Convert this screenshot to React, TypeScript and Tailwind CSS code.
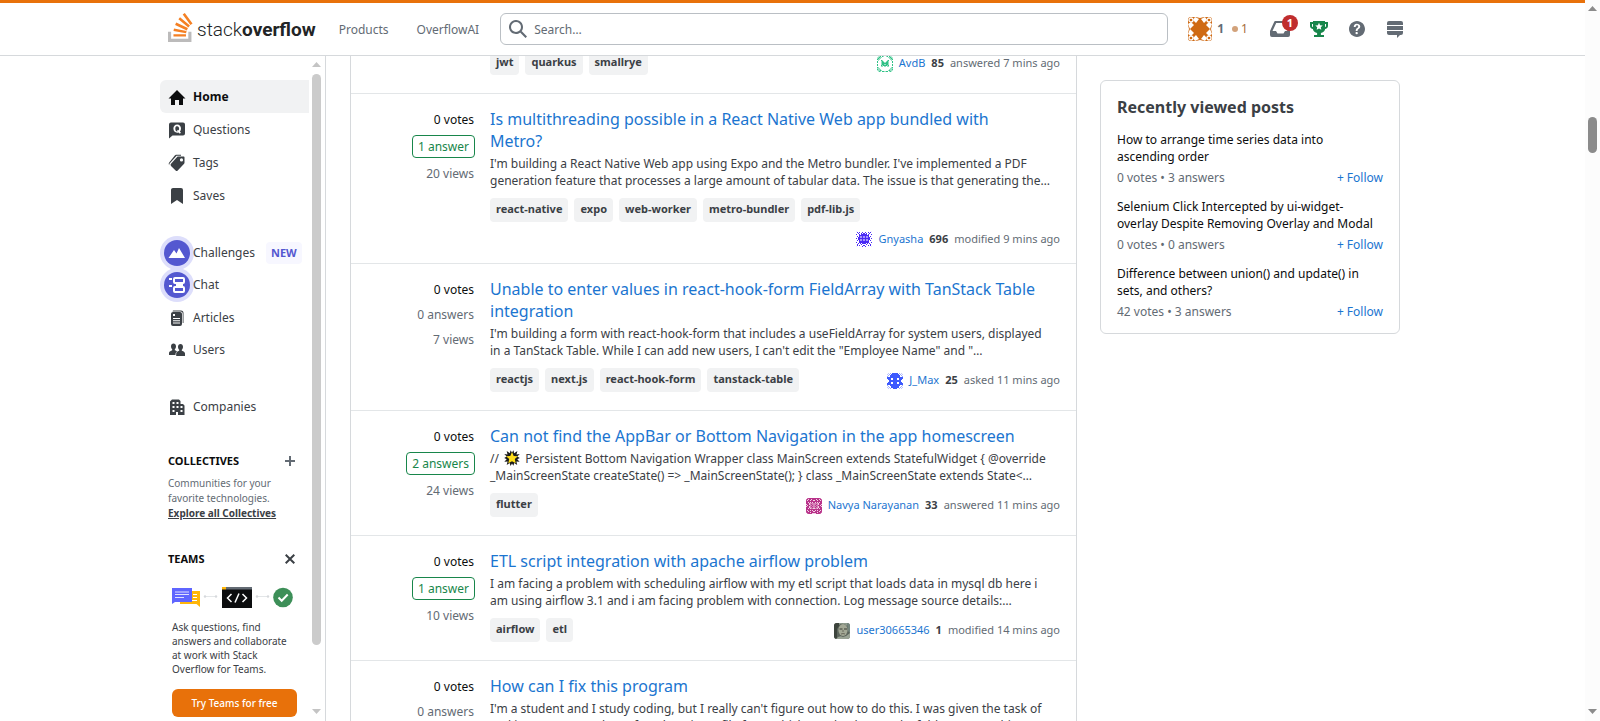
import type { ReactNode } from 'react';

type Stat = { votes: string; answers: string; accepted?: boolean; views: string };
type Post = {
  stat: Stat;
  title: string;
  excerpt: ReactNode;
  tags: string[];
  user: string;
  rep: string;
  action: string;
  avatar: ReactNode;
  wrapCard?: boolean;
};

function Identicon({ rows, color, bg }: { rows: string[]; color: string; bg: string }) {
  const n = rows.length;
  return (
    <svg className="size-4 shrink-0 rounded-[3px]" viewBox={`0 0 ${n} ${n}`} shapeRendering="crispEdges" aria-hidden="true">
      <rect width={n} height={n} fill={bg} />
      {rows.flatMap((row, y) =>
        [...(row + [...row].reverse().join(''))].map((c, x) =>
          c === '.' ? null : (
            <rect key={`${x}-${y}`} x={x} y={y} width="1" height="1" fill={color} opacity={c === 'o' ? 0.5 : 1} />
          ),
        ),
      )}
    </svg>
  );
}

const avdb = (
  <Identicon color="#2fc186" bg="#ffffff" rows={['.oox.xo.', 'ooxoo...', 'oxoo....', 'xoo.....', '.o..xo..', 'x...oxo.', 'x...oxxo', '....oxxx', 'x...oxxo', 'x...xoxx', '....oo.o', 'xo......', 'ooo.....', 'xooo....', 'oooxo...', '.oxo.xxo']} />
);
const gnyasha = (
  <Identicon color="#4b2bf5" bg="#ffffff" rows={['x.......', '.x.x..x.', '..x..x.x', 'x..x.xxx', '...xxxxx', '.x.xooxo', '..xxooxo', 'x.xxxxxx', '..xxooxo', '.x.xooxo', '...xxxxx', 'x..xxxxx', '..x.x.xx', '.x...x..', '.x.x...x', 'x.....x.']} />
);
const jmax = (
  <Identicon color="#3d5afe" bg="#ffffff" rows={['.o.o.xxx', 'o.o.xxxx', '.o.xxxxx', 'o..xxxxx', 'xxxxxxxx', 'xxxx..xx', '.xxx..xx', '..xxxxxx', '..xxxxxx', '.xxx..xx', 'xxxx..xx', 'xxxxxxxx', 'o..xxxxx', '.o..xxxx', 'o.o.xxxx', '.o.o..xx']} />
);
const navya = (
  <Identicon color="#b8338a" bg="#f3cfe5" rows={['.xxxxxxx', 'xx.xx.xx', 'x.xx.xx.', 'xxxxxxxx', 'xx.x.x.x', 'xxx.oooo', '.xx.oxoo', 'x.xxooxo', '.xx.oxoo', 'xxx.ooxo', 'xx.x.oo.', 'xxxxxxxx', 'x.xx.x.x', 'xx.xxxx.', 'xxxx.xxx', '.xxxxx..']} />
);
const photo = (
  <svg className="size-4 shrink-0 rounded-[3px]" viewBox="0 0 16 16" aria-hidden="true">
    <rect width="16" height="16" fill="#5d655c" />
    <path d="M0 0h7L3 6v10H0Z" fill="#3d443d" />
    <ellipse cx="9" cy="7" rx="4.6" ry="6" fill="#a3a895" />
    <path d="M5 2q4-3 8 1l1-3H5Z" fill="#8d9a8c" />
    <path d="M5.500 6h3M10 6h3" stroke="#3a3c36" strokeWidth="1.200" />
    <path d="M7 11q2-1 4 0M9 7v2" stroke="#6b6a5c" fill="none" />
    <path d="M2 16q3-4 7-2 4-1 7-4v6Z" fill="#9aa394" />
    <path d="M13 0h3v10l-2-2Z" fill="#74857d" />
  </svg>
);

const star = (
  <svg className="mx-[2px] inline-block size-4 align-[-3px]" viewBox="0 0 16 16" aria-hidden="true">
    <path
      d="M8 2.500 9.500.3l.6 2.900L13.400.9l-.9 3.500 3.200-.3-2.400 2.300 2.500 1.600-2.500 1.300 2.300 2.400-3.200-.2.8 3.500-3-1.900-.8 2.600L8 13.500l-1.500 2.400-.8-2.800-3 2 .9-3.600-3.300.2 2.400-2.400L.2 8l2.500-1.600L.3 4.100l3.200.3-.8-3.500L5.900 3.200 6.500.3Z"
      fill="#1b1b1b"
    />
    <path d="m8 2 1.700 3.900 4.200.4-3.100 2.800.9 4.200L8 11.200l-3.700 2.100.9-4.200-3.100-2.800 4.200-.4Z" fill="#ffde1a" />
  </svg>
);

const posts: Post[] = [
  {
    stat: { votes: '0 votes', answers: '1 answer', accepted: true, views: '20 views' },
    title: 'Is multithreading possible in a React Native Web app bundled with\nMetro?',
    excerpt:
      "I'm building a React Native Web app using Expo and the Metro bundler. I've implemented a PDF\ngeneration feature that processes a large amount of tabular data. The issue is that generating the…",
    tags: ['react-native', 'expo', 'web-worker', 'metro-bundler', 'pdf-lib.js'],
    user: 'Gnyasha',
    rep: '696',
    action: 'modified 9 mins ago',
    avatar: gnyasha,
    wrapCard: true,
  },
  {
    stat: { votes: '0 votes', answers: '0 answers', views: '7 views' },
    title: 'Unable to enter values in react-hook-form FieldArray with TanStack Table\nintegration',
    excerpt:
      'I\'m building a form with react-hook-form that includes a useFieldArray for system users, displayed\nin a TanStack Table. While I can add new users, I can\'t edit the "Employee Name" and "…',
    tags: ['reactjs', 'next.js', 'react-hook-form', 'tanstack-table'],
    user: 'J_Max',
    rep: '25',
    action: 'asked 11 mins ago',
    avatar: jmax,
  },
  {
    stat: { votes: '0 votes', answers: '2 answers', accepted: true, views: '24 views' },
    title: 'Can not find the AppBar or Bottom Navigation in the app homescreen',
    excerpt: (
      <>
        {'// '}
        {star}
        {
          ' Persistent Bottom Navigation Wrapper class MainScreen extends StatefulWidget { @override\n_MainScreenState createState() => _MainScreenState(); } class _MainScreenState extends State<…'
        }
      </>
    ),
    tags: ['flutter'],
    user: 'Navya Narayanan',
    rep: '33',
    action: 'answered 11 mins ago',
    avatar: navya,
  },
  {
    stat: { votes: '0 votes', answers: '1 answer', accepted: true, views: '10 views' },
    title: 'ETL script integration with apache airflow problem',
    excerpt:
      'I am facing a problem with scheduling airflow with my etl script that loads data in mysql db here i\nam using airflow 3.1 and i am facing problem with connection. Log message source details:…',
    tags: ['airflow', 'etl'],
    user: 'user30665346',
    rep: '1',
    action: 'modified 14 mins ago',
    avatar: photo,
  },
  {
    stat: { votes: '0 votes', answers: '0 answers', views: '9 views' },
    title: 'How can I fix this program',
    excerpt:
      "I'm a student and I study coding, but I really can't figure out how to do this. I was given the task of\nmaking a program that, after choosing a file from which to take data, and a folder to save things…",
    tags: ['python'],
    user: 'user1',
    rep: '1',
    action: 'asked 15 mins ago',
    avatar: jmax,
  },
];

const recent = [
  { title: 'How to arrange time series data into\nascending order', meta: '0 votes • 3 answers' },
  { title: 'Selenium Click Intercepted by ui-widget-\noverlay Despite Removing Overlay and Modal', meta: '0 votes • 0 answers' },
  { title: 'Difference between union() and update() in\nsets, and others?', meta: '42 votes • 3 answers' },
];

function Icon({ d, className = 'size-[18px]', box = '0 0 18 18' }: { d: string; className?: string; box?: string }) {
  return (
    <svg className={className} viewBox={box} fill="currentColor" fillRule="evenodd" aria-hidden="true">
      <path d={d} />
    </svg>
  );
}

function Header() {
  return (
    <header className="border-t-3 border-b border-t-[#e8710a] border-b-[#d6d9dc] bg-white">
      <div className="mx-auto flex h-[52px] max-w-[1265px] items-center pl-2">
        <a href="#" className="flex items-end gap-1 pb-[3px]">
          <svg className="h-[29px] w-[25px]" viewBox="0 0 32 37" aria-hidden="true">
            <path d="M26 33v-9h4v13H0V24h4v9h22Z" fill="#bcbbbb" />
            <path
              d="m21.500 0-2.700 2 9.900 13.300 2.700-2L21.500 0ZM26 18.400 13.300 7.800l2.100-2.500 12.700 10.600-2.100 2.500ZM9.100 15.200l15 7 1.400-3-15-7-1.400 3Zm14 10.790.68-2.950-16.100-3.350L7 23l16.100 2.990ZM23 30H7v-3h16v3Z"
              fill="#f48024"
            />
          </svg>
          <span className="font-['Roboto'] text-[19px] leading-6 text-[#222426]">
            <span className="font-light">stack</span>
            <span className="font-bold">overflow</span>
          </span>
        </a>
        <nav className="ml-[23px] flex gap-7 pt-[1px] text-xs text-[#636b74]">
          <a href="#">Products</a>
          <a href="#">OverflowAI</a>
        </nav>
        <div className="ml-[21px] flex h-8 w-[668px] items-center gap-[7px] rounded-md border border-[#babfc4] pl-2 text-[#636b74]">
          <Icon d="m18 16.500-5.140-5.180h-.35a7 7 0 1 0-1.190 1.190v.35L16.500 18l1.500-1.500ZM12 7A5 5 0 1 1 2 7a5 5 0 0 1 10 0Z" />
          <input
            type="text"
            aria-label="Search"
            placeholder="Search…"
            className="h-full min-w-0 flex-1 bg-transparent text-xs outline-none placeholder:text-[#636b74]"
          />
        </div>
        <div className="ml-5 flex items-center text-xs text-[#636b74]">
          <a href="#" className="flex items-center gap-[5px]" aria-label="Profile">
            <svg className="size-6 rounded-[3px]" viewBox="0 0 24 24" aria-hidden="true">
              <rect width="24" height="24" fill="#cf6a14" />
              <path d="M8 0h8l-4 1ZM8 24h8l-4-1ZM0 8v8l1-4ZM24 8v8l-1-4Z" fill="#fff" />
              <path d="M7 0l4 2-3 4-3-3ZM17 0l-4 2 3 4 3-3ZM7 24l4-2-3-4-3 3ZM17 24l-4-2 3-4 3 3ZM0 7l2 5 4-4-3-3ZM0 17l2-5 4 4-3 3ZM24 7l-2 5-4-4 3-3ZM24 17l-2-5-4 4 3 3Z" fill="#fff" />
              <g fill="none" stroke="#fff" strokeWidth="1.300">
                <circle cx="3" cy="3" r="2" />
                <circle cx="21" cy="3" r="2" />
                <circle cx="3" cy="21" r="2" />
                <circle cx="21" cy="21" r="2" />
              </g>
            </svg>
            <span className="font-bold">1</span>
            <span className="ml-[3px] flex items-center gap-[3px] text-[#a66d3c]">
              <span className="size-[6px] rounded-full bg-[#d2a27b]" />1
            </span>
          </a>
          <button type="button" aria-label="Inbox" className="relative ml-[22px]">
            <Icon className="h-[18px] w-5" box="0 0 20 18" d="M5.300 1h9.400a1 1 0 0 1 .95.6L20 11v4a2 2 0 0 1-2 2H2a2 2 0 0 1-2-2v-4l4.350-9.400A1 1 0 0 1 5.300 1ZM6.200 3 2.500 11H6l1.500 2.500h6L15 11h2.500L13.800 3Z" />
            <span className="absolute -top-[5px] left-3 flex size-4 items-center justify-center rounded-full bg-[#c02d2e] text-[11px] leading-4 font-bold text-white">1</span>
          </button>
          <button type="button" aria-label="Achievements" className="ml-5 text-[#18864b]">
            <Icon d="M15 2V1H3v1H0v4c0 1.600 1.400 3 3 3v.4c.3 1.900 2.100 3.200 4.100 3.500V15H4v2h10v-2h-3.100v-2.100c2-.3 3.800-1.600 4.100-3.500V9c1.600 0 3-1.400 3-3V2h-3ZM3 7c-.5 0-1-.5-1-1V4h1v3Zm13-1c0 .5-.5 1-1 1V4h1v2ZM9 2.800l1.100 2.400 2.600.3-1.900 1.800.5 2.500L9 8.500 6.700 9.800l.5-2.500-1.900-1.800 2.600-.3L9 2.800Z" />
          </button>
          <button type="button" aria-label="Help" className="ml-5">
            <Icon d="M9 1C4.640 1 1 4.640 1 9c0 4.360 3.640 8 8 8 4.360 0 8-3.640 8-8 0-4.360-3.640-8-8-8Zm.81 12.130c-.02.71-.55 1.150-1.240 1.130-.66-.02-1.170-.49-1.150-1.200.02-.72.56-1.180 1.220-1.160.7.03 1.200.51 1.170 1.230ZM11.770 8c-.59.66-1.780 1.090-2.050 1.970a4 4 0 0 0-.09.75c0 .05-.03.16-.18.16H7.880c-.16 0-.18-.1-.18-.15.06-1.350.66-2.200 1.830-2.880.39-.29.7-.75.7-1.240.01-1.240-1.640-1.820-2.350-.72-.21.33-.18.73-.18 1.100H5.750c0-1.970 1.030-3.260 3.030-3.260 1.750 0 3.470.87 3.470 2.830 0 .57-.2 1.050-.48 1.440Z" />
          </button>
          <button type="button" aria-label="Stack Exchange" className="ml-5">
            <Icon d="M15 1H3a2 2 0 0 0-2 2v2h16V3a2 2 0 0 0-2-2ZM1 13c0 1.100.9 2 2 2h8v3l3-3h1a2 2 0 0 0 2-2v-2H1V13ZM17 6H1v4h16V6Z" />
          </button>
        </div>
      </div>
    </header>
  );
}

function NavItem({
  label,
  children,
  active,
  compact,
  badge,
}: {
  label: string;
  children: ReactNode;
  active?: boolean;
  compact?: boolean;
  badge?: string;
}) {
  const tone = active ? 'rounded-l-md bg-[#f1f2f3] font-bold text-[#0c0d0e]' : 'text-[#3b4045]';
  const height = compact ? 'h-8' : 'h-[33px]';
  return (
    <li>
      <a href="#" className={`flex items-center gap-[7px] pl-2 ${height} ${tone}`}>
        <span className="flex size-[18px] items-center justify-center">{children}</span>
        {label}
        {badge && (
          <span className="ml-1 rounded-sm bg-[#f7f7ff] px-[5px] text-[11px] leading-[22px] font-bold text-[#5458d0]">{badge}</span>
        )}
      </a>
    </li>
  );
}

function Halo({ children }: { children: ReactNode }) {
  return (
    <span className="flex size-[34px] shrink-0 items-center justify-center rounded-full bg-[#dddefb]">
      <span className="flex size-[26px] items-center justify-center rounded-full bg-[#5458d0] text-white">{children}</span>
    </span>
  );
}

function Sidebar() {
  return (
    <aside className="flex w-[166px] shrink-0 overflow-hidden border-r border-[#d6d9dc]">
      <div className="w-[149px] shrink-0 pt-6 text-xs">
        <nav aria-label="Main">
          <ul>
            <NavItem label="Home" active>
              <Icon d="M17.500 10.500 9 2 .5 10.500H3V17h4v-5h4v5h4v-6.500Z" />
            </NavItem>
            <NavItem label="Questions">
              <Icon d="M3 1.500h12a2 2 0 0 1 2 2v9a2 2 0 0 1-2 2H4.500L1 17.500v-14a2 2 0 0 1 2-2Zm6.200 2C6.900 3.500 5.400 5.200 5.400 7.600s1.500 4.100 3.800 4.100c.5 0 .9-.1 1.300-.2l1.400 1.200 1-1.200-1-.8c.7-.8 1.100-1.800 1.100-3.100 0-2.400-1.500-4.100-3.800-4.100Zm0 1.700c1.200 0 1.900.9 1.900 2.400 0 .8-.2 1.400-.5 1.800l-.7-.6-.9 1.100.7.6-.5.1c-1.200 0-1.900-1.200-1.900-3s.7-2.400 1.900-2.400Z" />
            </NavItem>
            <NavItem label="Tags">
              <Icon d="M10.200 2.600h5.300c.6 0 1 .4 1 1v5.100c0 .4-.2.800-.4 1.100l-6.400 6.600a1.500 1.500 0 0 1-2.100 0L3 11.900a1.500 1.500 0 0 1 0-2.100L9.100 3c.3-.3.700-.4 1.100-.4Zm3.300 1.700a1.600 1.600 0 1 0 0 3.200 1.600 1.600 0 0 0 0-3.200ZM8 .8h5v.9H8.600L1.600 9.400c-.5.6-.5 1.300-.2 1.900-.9-.7-.9-1.900-.2-2.700L7 1.300c.3-.3.600-.5 1-.5Z" />
            </NavItem>
            <NavItem label="Saves">
              <Icon d="M5 1h8a2 2 0 0 1 2 2v14l-6-4-6 4V3c0-1.100.9-2 2-2Z" />
            </NavItem>
          </ul>
          <ul className="pt-[25px]">
            <NavItem label="Challenges" badge="NEW" compact>
              <Halo>
                <Icon className="h-4 w-[18px]" box="0 0 18 16" d="M.5 13 6 5l2.500 3.500L11 3l6 10Z" />
              </Halo>
            </NavItem>
            <NavItem label="Chat" compact>
              <Halo>
                <svg className="size-[18px]" viewBox="0 0 18 18" fill="none" stroke="currentColor" strokeWidth="2" aria-hidden="true">
                  <rect x="6" y="2" width="10" height="5" rx="1" />
                  <rect x="6" y="11" width="10" height="5" rx="1" />
                  <path d="M1 3h3M1 10h3M8 9h7" />
                </svg>
              </Halo>
            </NavItem>
            <NavItem label="Articles">
              <Icon d="M5 3h7c1.100 0 2 .9 2 2v10a2 2 0 0 1-2 2H5a2 2 0 0 1-2-2V5c0-1.100.9-2 2-2Zm0 2v2h2V5H5Zm0 4v1h7V9H5Zm0 2.200v1h7v-1H5Zm0 2.200v1h7v-1H5ZM5 1.500h8A2.500 2.500 0 0 1 15.500 4v10h-.8V4.500a2 2 0 0 0-2-2H4.500Z" />
            </NavItem>
            <NavItem label="Users" compact>
              <Icon d="M5.500 2.500C7 2.500 8 3.600 8 5.300c0 1.400-.5 2.400-1.200 3v1c1.300.5 2 .8 2.300 1.200C8 11.200 7.500 12 7.500 13.500v.5H1v-2c0-1.200 1-1.800 3.200-2.700v-1C3.500 7.700 3 6.700 3 5.300c0-1.700 1-2.800 2.500-2.800Zm7 .5C14 3 15 4.100 15 5.800c0 1.400-.5 2.300-1.200 3v1C16 10.600 17 11.300 17 12.500V15H8.200v-2.500c0-1.200 1-1.900 3-2.700v-1C10.500 8.100 10 7.200 10 5.800 10 4.100 11 3 12.500 3Z" />
            </NavItem>
          </ul>
          <ul className="pt-6">
            <NavItem label="Companies">
              <Icon d="M4 1.500h7l1.500 1.500v3H15L16.500 7.500V17H10v-3H8v3H2V3.500Zm.5 2.500v2h2V4h-2Zm4 0v2h2V4h-2Zm-4 4v2h2V8h-2Zm4 0v2h2V8h-2Zm4 0v2h2V8h-2Zm-8 4v2h2v-2h-2Zm8 0v2h2v-2h-2Z" />
            </NavItem>
          </ul>
        </nav>
        <section className="pt-[29px] pl-2 text-[10px]">
          <div className="flex items-center justify-between pr-[14px]">
            <h2 className="text-[11px] leading-[18px] font-bold text-[#0c0d0e]">COLLECTIVES</h2>
            <button type="button" aria-label="Add collective" className="text-[#636b74]">
              <svg className="size-[10px]" viewBox="0 0 10 10" aria-hidden="true">
                <path d="M5 0v10M0 5h10" stroke="currentColor" strokeWidth="2" />
              </svg>
            </button>
          </div>
          <p className="pt-[6px] leading-[15px] whitespace-pre-line text-[#636b74]">{'Communities for your\nfavorite technologies.'}</p>
          <a href="#" className="leading-[14px] font-bold text-[#3b4045] underline">
            Explore all Collectives
          </a>
        </section>
        <section className="pt-[30px] pl-2 text-[10px]">
          <div className="flex items-center justify-between pr-[14px]">
            <h2 className="text-[11px] leading-[18px] font-bold text-[#0c0d0e]">TEAMS</h2>
            <button type="button" aria-label="Close" className="text-[#3b4045]">
              <svg className="size-[10px]" viewBox="0 0 10 10" aria-hidden="true">
                <path d="M.7.7l8.600 8.600M9.300.7.7 9.300" stroke="currentColor" strokeWidth="2" />
              </svg>
            </button>
          </div>
          <div className="pt-[19px] pr-3 pl-1">
            <svg className="h-[21px] w-[122px]" viewBox="0 0 122 21" aria-hidden="true">
              <path d="M15 4h13v16l-3.500-3H8v-3h7Z" fill="#ffb60a" />
              <path d="M21 7.500h4M21 10.500h4M19 13.500h6" stroke="#fff" />
              <path d="M0 1h20v14H3l-3 2Z" fill="#5f65ff" />
              <path d="M3 5h14M3 7.500h14M3 10.500h9" stroke="#dfe0ff" />
              <path d="M33 9.500h11M85 9.500h11" stroke="#e3e6e8" />
              <g fill="#d6d9dc">
                <circle cx="33" cy="9.500" r="1.200" />
                <circle cx="44" cy="9.500" r="1.200" />
                <circle cx="85" cy="9.500" r="1.200" />
                <circle cx="96" cy="9.500" r="1.200" />
              </g>
              <path d="M50 0h30v21H50Z" fill="#0c0d0e" />
              <path d="M54 0h26v2.500H54Z" fill="#636b74" />
              <path d="M50 0h4v2.500h-4Z" fill="#ffb60a" />
              <path d="m59.500 7-4 4 4 4M70.500 7l4 4-4 4M67 6.500l-4 9" stroke="#fff" strokeWidth="1.500" fill="none" />
              <circle cx="111" cy="10.500" r="9.800" fill="#3d8f58" />
              <path d="m106.500 10.500 3.200 3.200 6-6.200" stroke="#fff" strokeWidth="2" fill="none" />
            </svg>
            <p className="pt-3 leading-[14px] whitespace-pre-line text-[#3b4045]">{'Ask questions, find\nanswers and collaborate\nat work with Stack\nOverflow for Teams.'}</p>
            <button type="button" className="mt-[13px] h-7 w-[125px] rounded-md bg-[#e8710a] text-[10px] font-medium text-white">
              Try Teams for free
            </button>
          </div>
        </section>
      </div>
      <div className="flex flex-1 flex-col items-center pt-[6px] pr-[1px] pb-[7px]" aria-hidden="true">
        <svg className="h-[5px] w-[9px]" viewBox="0 0 9 5">
          <path d="M4.500 0 9 5H0Z" fill="#c4c4c4" />
        </svg>
        <span className="mt-[7px] min-h-0 w-[9px] flex-1 rounded-full bg-[#cbcbcb]" />
        <svg className="mt-16 h-[5px] w-[9px]" viewBox="0 0 9 5">
          <path d="M0 0h9L4.500 5Z" fill="#c4c4c4" />
        </svg>
      </div>
    </aside>
  );
}

function Tag({ name }: { name: string }) {
  return (
    <a href="#" className="flex h-6 items-center rounded-sm bg-[#f1f2f3] px-[6px] pb-[1px] text-[11px] font-bold text-[#3b4045]">
      {name}
    </a>
  );
}

function Meta({ tags, user, rep, action, avatar, wrapCard }: Pick<Post, 'tags' | 'user' | 'rep' | 'action' | 'avatar' | 'wrapCard'>) {
  return (
    <div className={wrapCard ? 'flex flex-col gap-[9px]' : 'flex justify-between'}>
      <div className="flex gap-[6px]">
        {tags.map((t) => (
          <Tag key={t} name={t} />
        ))}
      </div>
      <div
        className={
          wrapCard
            ? 'flex h-4 items-center gap-[6px] self-end text-[11px]'
            : 'flex items-center gap-[6px] pt-[1px] text-[11px]'
        }
      >
        {avatar}
        <a href="#" className="text-[#1b75d0]">
          {user}
        </a>
        <span className="font-bold text-[#3b4045]">{rep}</span>
        <span className="text-[#636b74]">{action}</span>
      </div>
    </div>
  );
}

function QuestionRow({ post }: { post: Post }) {
  const { stat } = post;
  return (
    <article className={`flex gap-[15px] border-t border-[#e3e6e8] px-4 pt-[14px] ${post.wrapCard ? 'pb-4' : 'pb-[18px]'}`}>
      <div className="flex w-[108px] shrink-0 flex-col items-end gap-[6px] pt-[2px] text-xs leading-[19px] text-[#636b74]">
        <span className="pr-[1px] text-[#0c0d0e]">{stat.votes}</span>
        {stat.accepted ? (
          <span className="rounded-sm border border-[#18864b] px-[5px] leading-[21px] text-[#18864b]">{stat.answers}</span>
        ) : (
          <span className="pr-[1px]">{stat.answers}</span>
        )}
        <span className="pr-[1px]">{stat.views}</span>
      </div>
      <div className="min-w-0 flex-1">
        <h3 className="text-base leading-[22px] whitespace-pre-line text-[#1b75d0]">
          <a href="#">{post.title}</a>
        </h3>
        <p className="mt-[3px] mb-[9px] text-xs leading-[17px] whitespace-pre-line text-[#3b4045]">{post.excerpt}</p>
        <Meta {...post} />
      </div>
    </article>
  );
}

function RecentPosts() {
  return (
    <aside className="mt-6 w-[300px] shrink-0 self-start rounded-md border border-[#d6d9dc] px-4 pt-[14px] pb-[13px]">
      <h2 className="text-base leading-6 font-bold text-[#3b4045]">Recently viewed posts</h2>
      <ul className="flex flex-col gap-3 pt-3 text-xs leading-[17px]">
        {recent.map((r) => (
          <li key={r.title}>
            <a href="#" className="whitespace-pre-line text-[#0c0d0e]">
              {r.title}
            </a>
            <div className="flex justify-between pt-1 text-[#636b74]">
              <span>{r.meta}</span>
              <button type="button" className="text-[#1b75d0]">
                + Follow
              </button>
            </div>
          </li>
        ))}
      </ul>
    </aside>
  );
}

export default function App() {
  return (
    <div className="flex h-screen overflow-hidden bg-white font-['Noto_Sans',sans-serif]">
      <div className="flex min-w-0 flex-1 flex-col">
        <Header />
        <div className="mx-auto flex min-h-0 w-full max-w-[1265px] flex-1">
          <Sidebar />
          <main className="flex min-w-0 flex-1 gap-[23px] overflow-hidden pr-[25px] pl-6">
            <div className="min-w-0 flex-1 border-x border-[#d6d9dc]">
              <div className="-mt-[5px] pr-4 pb-[18px] pl-[139px]">
                <Meta tags={['jwt', 'quarkus', 'smallrye']} user="AvdB" rep="85" action="answered 7 mins ago" avatar={avdb} />
              </div>
              {posts.map((p) => (
                <QuestionRow key={p.title} post={p} />
              ))}
            </div>
            <RecentPosts />
          </main>
        </div>
      </div>
      <div className="flex w-[15px] shrink-0 flex-col items-center bg-[#fcfcfc] pt-[6px] pb-[7px]" aria-hidden="true">
        <svg className="h-[5px] w-[9px]" viewBox="0 0 9 5">
          <path d="M4.500 0 9 5H0Z" fill="#8b8b8b" />
        </svg>
        <span className="mt-[106px] h-9 w-[9px] rounded-full bg-[#8b8b8b]" />
        <svg className="mt-auto h-[5px] w-[9px]" viewBox="0 0 9 5">
          <path d="M0 0h9L4.500 5Z" fill="#8b8b8b" />
        </svg>
      </div>
    </div>
  );
}
